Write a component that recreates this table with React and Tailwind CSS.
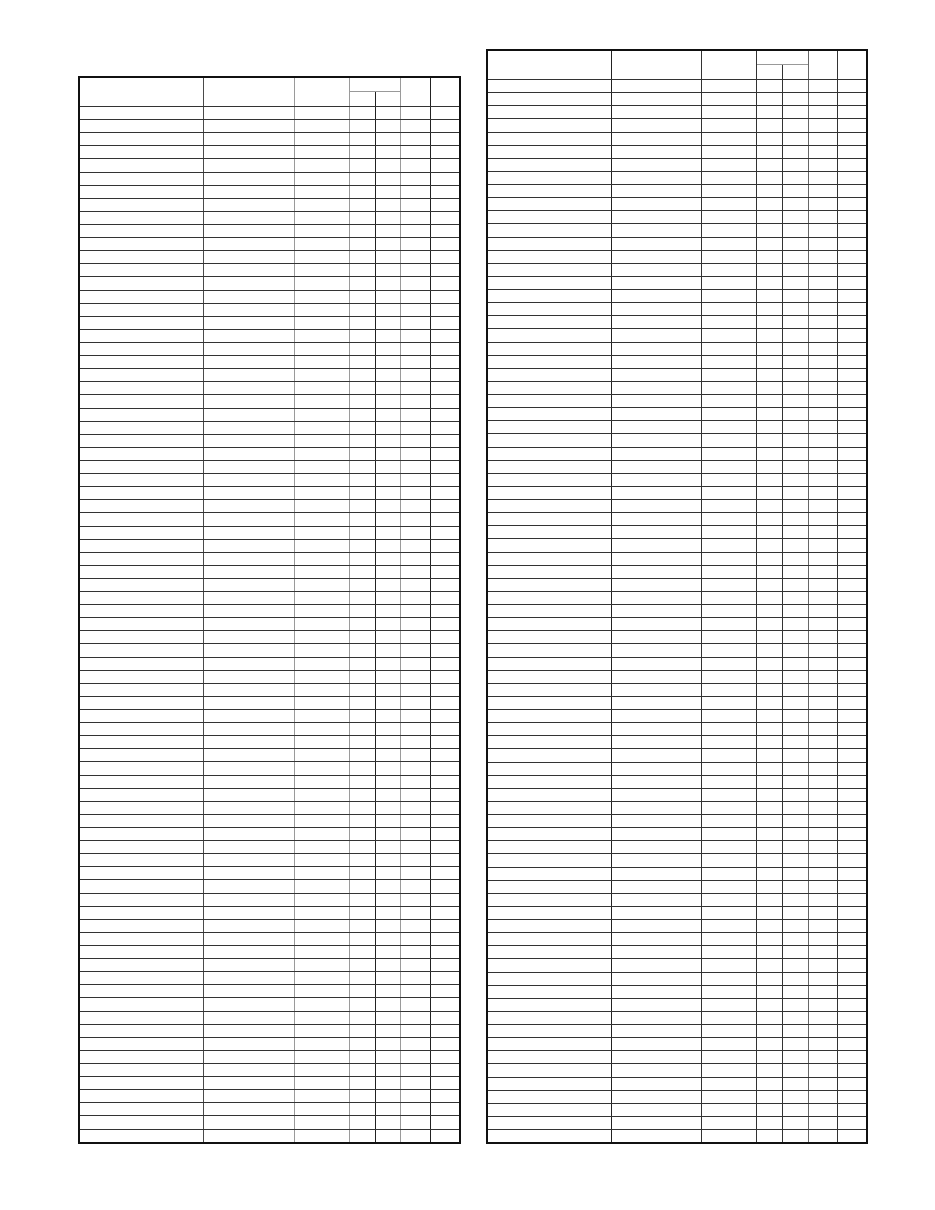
import React from "react";

const LEFT = {
  rows: 79,
  box: "ml-[78px] mt-[76px] w-[383px] h-[1068px]",
  cells: [
    "w-[124px] border-r border-[#4a4a4a]",
    "w-[91px] border-r border-[#9a9a9a]",
    "w-[55px] border-r border-[#9a9a9a]",
    "w-[26px] border-r border-[#222]",
    "w-[25px] border-r border-[#9a9a9a]",
    "w-[30px] border-r border-[#222]",
    "flex-1",
  ],
  head: [
    "w-[124px] border-r border-[#4a4a4a]",
    "w-[91px] border-r border-[#9a9a9a]",
    "w-[55px] border-r border-[#9a9a9a]",
  ],
  group: "w-[51px] border-r border-[#9a9a9a]",
  sub: "w-[26px] border-r border-[#222]",
  after: "w-[30px] border-r border-[#222]",
};

const RIGHT = {
  rows: 81,
  box: "ml-[25px] mt-[49px] w-[382px] h-[1095px]",
  cells: [
    "w-[124px] border-r border-[#222]",
    "w-[90px] border-r border-[#333]",
    "w-[55px] border-r border-[#333]",
    "w-[26px] border-r border-[#333]",
    "w-[26px] border-r border-[#666]",
    "w-[29px] border-r border-[#333]",
    "flex-1",
  ],
  head: [
    "w-[124px] border-r border-[#222]",
    "w-[90px] border-r border-[#333]",
    "w-[55px] border-r border-[#333]",
  ],
  group: "w-[52px] border-r border-[#666]",
  sub: "w-[26px] border-r border-[#333]",
  after: "w-[29px] border-r border-[#333]",
};

function Sheet({ spec }) {
  const rows = Array.from({ length: spec.rows });
  return (
    <div className={`${spec.box} shrink-0 flex flex-col border-2 border-[#111]`}>
      <div className="h-[29px] shrink-0 flex border-b border-[#333]">
        {spec.head.map((c, i) => (
          <div key={i} className={`${c} shrink-0 h-full`} />
        ))}
        <div className={`${spec.group} shrink-0 h-full flex flex-col`}>
          <div className="h-[14px] shrink-0 border-b border-[#999]" />
          <div className="flex-1 flex">
            <div className={`${spec.sub} shrink-0 h-full`} />
            <div className="flex-1" />
          </div>
        </div>
        <div className={`${spec.after} shrink-0 h-full`} />
        <div className="flex-1 h-full" />
      </div>
      <div className="flex-1 flex flex-col">
        {rows.map((_, r) => (
          <div
            key={r}
            className="flex-1 flex border-b border-[#333] last:border-b-0"
          >
            {spec.cells.map((c, i) => (
              <div key={i} className={`${c} shrink-0`} />
            ))}
          </div>
        ))}
      </div>
    </div>
  );
}

export default function App() {
  return (
    <div
      className="w-[935px] h-[1210px] bg-white flex items-start"
      style={{ fontFamily: '"Liberation Sans", Arial, sans-serif' }}
    >
      <Sheet spec={LEFT} />
      <Sheet spec={RIGHT} />
    </div>
  );
}
